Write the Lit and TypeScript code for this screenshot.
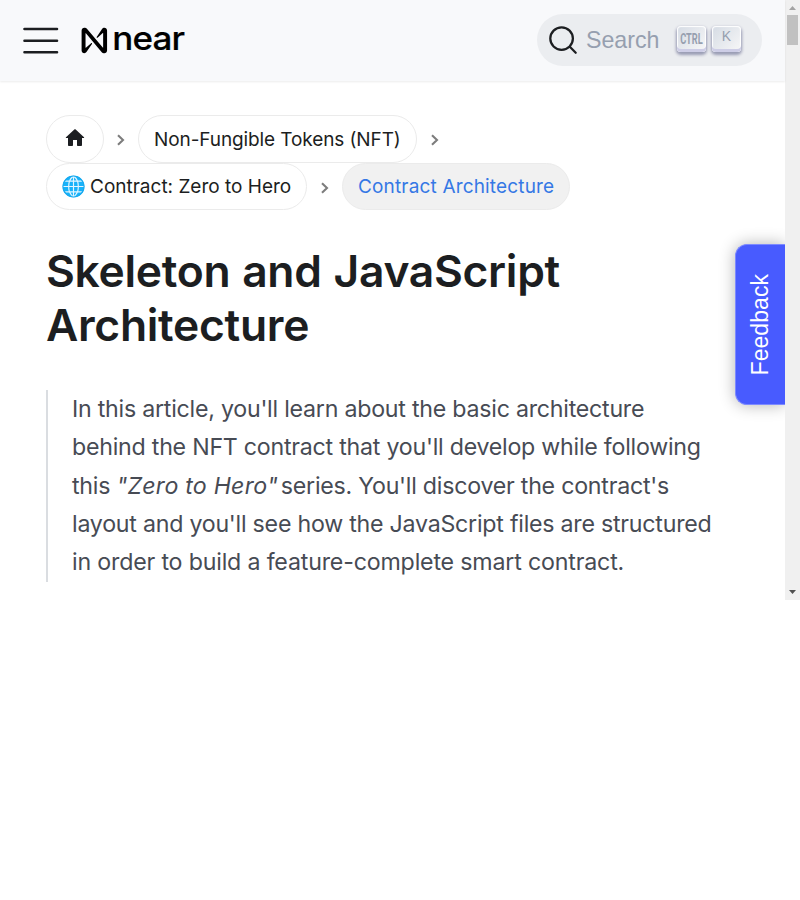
import { LitElement, html, css } from "lit";
import { customElement } from "lit/decorators.js";

const chevron = html`<svg class="chev" viewBox="0 0 10 14" width="10" height="14"><path d="M2 2.2 L7 7 L2 11.8" fill="none" stroke="#7d7d7d" stroke-width="2.1"/></svg>`;

@customElement("site-navbar")
export class SiteNavbar extends LitElement {
  static styles = css`
    :host { display: block; font-family: "Liberation Sans", Arial, sans-serif; }
    .bar { height: 81px; box-sizing: border-box; background: #f8f9fb; display: flex; align-items: center; padding: 0 23px 1px; box-shadow: 0 1px 2px rgba(0,0,0,.08); }
    .menu { display: block; width: 36px; height: 30px; }
    .mark { display: block; margin-left: 22px; overflow: visible; }
    .search { margin-left: auto; width: 225px; height: 52px; border-radius: 26px; background: #ebedf0; display: flex; align-items: center; box-sizing: border-box; padding: 0 21px 0 11px; }
    .label { font-size: 23.2px; color: #969faf; margin-left: 8px; line-height: 52px; }
    .keys { margin-left: auto; margin-bottom: 3px; display: flex; gap: 6px; }
    .key { width: 29px; height: 26px; box-sizing: border-box; border-radius: 4px; background: linear-gradient(-225deg, #d5dbe4, #f8f8f8); box-shadow: inset 0 -3px 0 0 #cdcde6, inset 0 0 1px 1px #fff, 0 2px 3px 1px rgba(30,35,90,.4); display: flex; justify-content: center; color: #969faf; font-size: 14px; line-height: 21px; }
    .key svg { overflow: visible; }
  `;
  render() {
    return html`<nav class="bar">
      <svg class="menu" viewBox="0 0 36 30"><path d="M1.5 4H34M1.5 15.8H34M1.5 27.2H34" stroke="#1c1e21" stroke-width="2.6" stroke-linecap="round"/></svg>
      <svg class="mark" width="108" height="44" viewBox="0 0 108 44">
        <g transform="translate(.6 9.7) scale(.283)"><path d="M72.2 4.6L53.4 32.5C52.1 34.4 54.6 36.7 56.4 35.1L74.9 19C75.4 18.6 76.1 18.9 76.1 19.6V69.9C76.1 70.6 75.2 70.9 74.8 70.4L18.8 3.3C17 1.2 14.4 0 11.6 0H9.6C4.3 0 0 4.3 0 9.6V80.4C0 85.7 4.3 90 9.6 90C12.9 90 16 88.3 17.8 85.4L36.6 57.5C37.9 55.6 35.4 53.3 33.6 54.9L15.1 71C14.6 71.4 13.9 71.1 13.9 70.4V20.1C13.9 19.4 14.8 19.1 15.2 19.6L71.2 86.7C73 88.8 75.6 90 78.4 90H80.4C85.7 90 90 85.7 90 80.4V9.6C90 4.3 85.7 0 80.4 0C77 0 74 1.7 72.2 4.6Z"/></g>
        <text x="31.2" y="31.9" font-family="Inter, sans-serif" font-size="33" font-weight="500" letter-spacing="-.8" textLength="72" lengthAdjust="spacingAndGlyphs" stroke="#000" stroke-width=".2">near</text>
      </svg>
      <div class="search">
        <svg class="glass" width="30" height="30" viewBox="0 0 20 20"><path d="M14.386 14.386l4.0877 4.0877-4.0877-4.0877c-2.9418 2.9419-7.7115 2.9419-10.6533 0-2.9419-2.9418-2.9419-7.7115 0-10.6533 2.9418-2.9419 7.7115-2.9419 10.6533 0 2.9419 2.9418 2.9419 7.7115 0 10.6533z" stroke="#1c1e21" stroke-width="1.5" fill="none" stroke-linecap="round" stroke-linejoin="round"/></svg>
        <span class="label">Search</span>
        <div class="keys">
          <span class="key"><svg width="29" height="24" viewBox="0 0 29 24"><text x="3.2" y="17.9" font-family="Roboto, sans-serif" font-weight="700" font-size="14.5" fill="#969faf" textLength="22.5" lengthAdjust="spacingAndGlyphs">CTRL</text></svg></span>
          <span class="key">K</span>
        </div>
      </div>
    </nav>`;
  }
}

@customElement("page-crumbs")
export class PageCrumbs extends LitElement {
  static styles = css`
    :host { display: block; font-family: Inter, sans-serif; }
    .row { display: flex; align-items: center; }
    .first { height: 48px; }
    .second { height: 47px; }
    .crumb { height: 100%; box-sizing: border-box; border: 1px solid #ebebeb; border-radius: 24px; padding: 0 15px; display: flex; align-items: center; font-size: 19px; color: #1c1e21; white-space: nowrap; }
    .home { width: 58px; justify-content: center; }
    .home svg { margin: -3px 1px 0 0; }
    .globe { margin: 1px 5px 0 0; flex: none; }
    .chev { margin: 2px 12px 0 12px; flex: none; }
    .nft + .chev, .zero + .chev { margin-left: 13px; }
    .nft { width: 279px; letter-spacing: -.1px; }
    .zero { width: 261px; letter-spacing: 0; padding-bottom: 1px; }
    .active { width: 228px; background: #f1f1f1; color: #3578e5; letter-spacing: .16px; padding-bottom: 1px; }
  `;
  render() {
    return html`<div class="row first">
        <span class="crumb home"><svg width="24" height="24" viewBox="0 0 24 24"><path d="M10 19v-5h4v5c0 .55.45 1 1 1h3c.55 0 1-.45 1-1v-7h1.7c.46 0 .68-.57.33-.87L12.67 3.6c-.38-.34-.96-.34-1.34 0l-8.36 7.53c-.34.3-.13.87.33.87H5v7c0 .55.45 1 1 1h3c.55 0 1-.45 1-1z" fill="#1c1e21"/></svg></span>${chevron}
        <span class="crumb nft">Non-Fungible Tokens (NFT)</span>${chevron}
      </div>
      <div class="row second">
        <span class="crumb zero"><svg class="globe" width="23" height="23" viewBox="0 0 22 22"><circle cx="11" cy="11" r="10.3" fill="#17b2fa"/><path d="M11 1V21M1 11H21M3 5.8H19M3 16.2H19M11 1C4.8 5.5 4.8 16.5 11 21M11 1C17.2 5.5 17.2 16.5 11 21" fill="none" stroke="#e2f5ff" stroke-width="1.1"/><circle cx="11" cy="11" r="10.1" fill="none" stroke="#17a9ee"/></svg>Contract: Zero to Hero</span>${chevron}
        <span class="crumb active">Contract Architecture</span>
      </div>`;
  }
}

@customElement("app-root")
export class AppRoot extends LitElement {
  static styles = css`
    :host { display: block; height: 900px; background: #fff; font-family: Inter, sans-serif; }
    .window { display: flex; height: 600px; overflow: hidden; }
    .page { width: 785px; position: relative; }
    main { padding: 34px 46px 0; }
    h1 { margin: 34px 0 0; font-size: 44.4px; line-height: 54px; font-weight: 600; letter-spacing: -.3px; word-spacing: 1px; color: #1c1e21; white-space: nowrap; }
    blockquote { margin: 38px 0 0; height: 192px; border-left: 2px solid #dadde1; padding-left: 24px; font-size: 23.2px; line-height: 38.3px; letter-spacing: -.24px; color: #474b54; white-space: nowrap; }
    em { letter-spacing: .2px; margin-right: -3.5px; }
    .last { letter-spacing: -.18px; }
    .feedback { position: absolute; right: 0; top: 244px; width: 50px; height: 161px; box-sizing: border-box; background: #485bff; border: 1px solid #7d8aff; border-right: 0; border-radius: 12px 0 0 12px; box-shadow: 0 0 16px rgba(0,0,0,.3); color: #fff; font: 23.1px "Liberation Sans", Arial, sans-serif; display: flex; align-items: center; justify-content: center; padding-right: 2px; clip-path: inset(-30px 0 -30px -30px); }
    .vertical { writing-mode: vertical-rl; transform: rotate(180deg); line-height: 28px; }
    .scroll { width: 15px; background: #f0f0f0; display: flex; flex-direction: column; align-items: center; }
    .thumb { width: 11px; height: 30px; background: #c1c1c1; }
    .down { margin-top: auto; }
    .scroll svg { display: block; }
  `;
  render() {
    return html`<div class="window">
      <div class="page">
        <site-navbar></site-navbar>
        <main>
          <page-crumbs></page-crumbs>
          <h1>Skeleton and JavaScript<br>Architecture</h1>
          <blockquote>In this article, you'll learn about the basic architecture<br>behind the NFT contract that you'll develop while following<br>this <em>"Zero to Hero"</em> series. You'll discover the contract's<br>layout and you'll see how the JavaScript files are structured<br><span class="last">in order to build a feature-complete smart contract.</span></blockquote>
        </main>
        <div class="feedback"><span class="vertical">Feedback</span></div>
      </div>
      <div class="scroll">
        <svg width="15" height="15" viewBox="0 0 15 15"><path d="M4 10L7.5 6L11 10Z" fill="#a3a3a3"/></svg>
        <div class="thumb"></div>
        <svg class="down" width="15" height="15" viewBox="0 0 15 15"><path d="M4 5L7.5 9L11 5Z" fill="#505050"/></svg>
      </div>
    </div>`;
  }
}
